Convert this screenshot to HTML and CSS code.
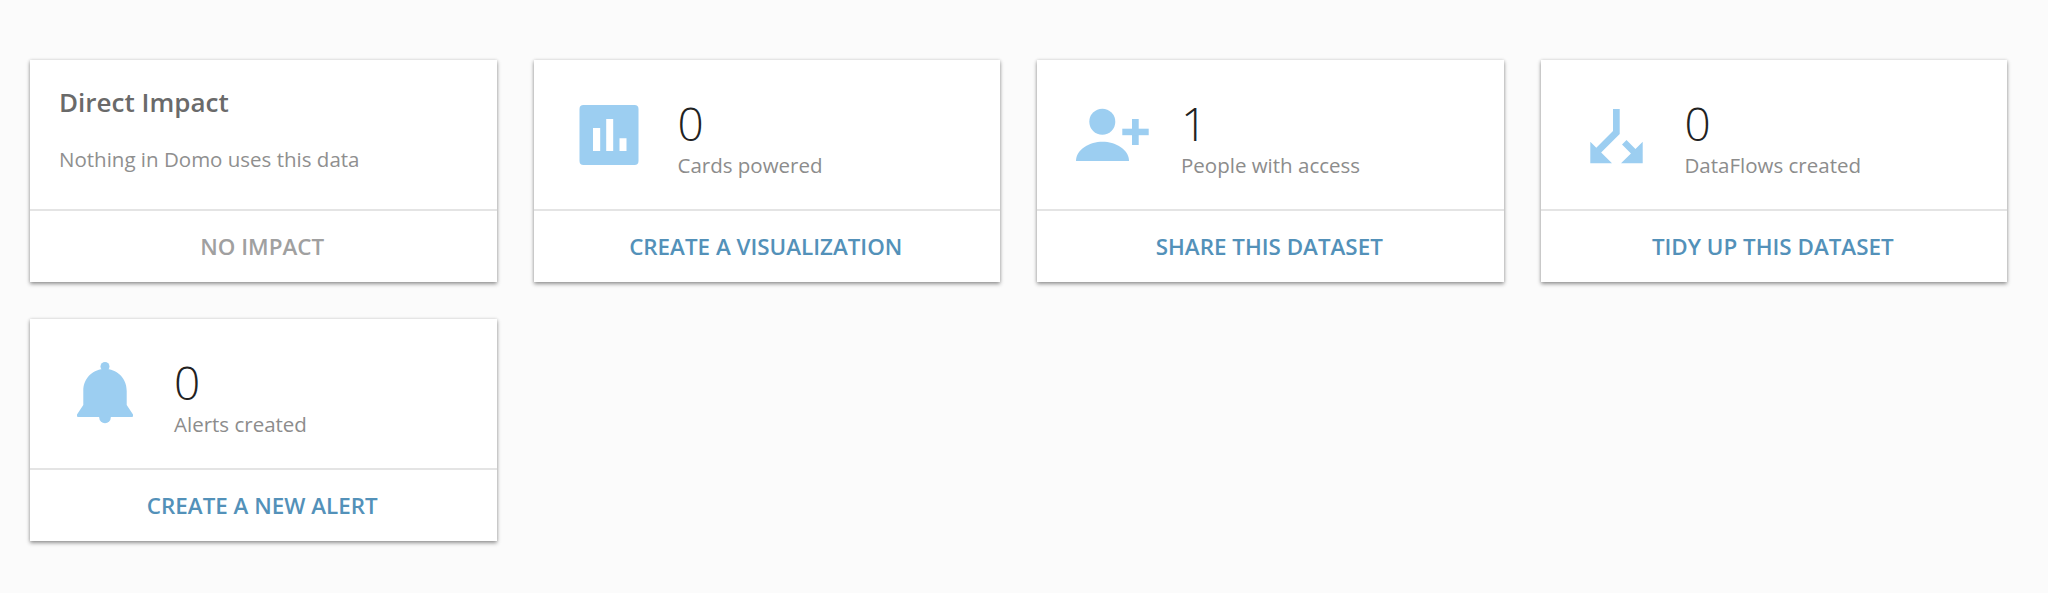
FILE: index.html
```html
<!DOCTYPE html>
<html lang="en">
<head>
    <meta charset="UTF-8">
    <meta name="viewport" content="width=device-width, initial-scale=1.0">
    <title>Impact</title>
    <link rel="stylesheet" href="styles.css">
</head>
<body>
<main class="impact-grid">
	<!-- summary -->
	<section class="card">
		<div class="card-body card-body-text">
			<h4 class="card-title">Direct Impact</h4>
			<p class="card-desc">Nothing in Domo uses this data</p>
		</div>
		<div class="card-action card-action-muted">NO IMPACT</div>
	</section>

	<section class="card">
		<div class="card-body">
			<svg class="card-icon" viewBox="0 0 90 60">
				<path fill-rule="evenodd" d="M19.500 0H70.500a4 4 0 0 1 4 4V56a4 4 0 0 1-4 4H19.500a4 4 0 0 1-4-4V4a4 4 0 0 1 4-4ZM29 23V46H36.200V23ZM42.200 14V46H49.200V14ZM55.500 33.300V46H62.500V33.300Z"/>
			</svg>
			<div class="stat">
				<div class="stat-num">0</div>
				<div class="stat-label">Cards powered</div>
			</div>
		</div>
		<div class="card-action">CREATE A VISUALIZATION</div>
	</section>

	<section class="card">
		<div class="card-body">
			<svg class="card-icon" viewBox="0 0 90 60">
				<circle cx="35.300" cy="16.700" r="13"/>
				<path d="M9 56C9 44 23 36.700 35.500 36.700S62 44 62 56Z"/>
				<rect x="65" y="14" width="6.700" height="26"/>
				<rect x="55.300" y="23.700" width="26.400" height="6.500"/>
			</svg>
			<div class="stat">
				<div class="stat-num">1</div>
				<div class="stat-label">People with access</div>
			</div>
		</div>
		<div class="card-action">SHARE THIS DATASET</div>
	</section>

	<section class="card">
		<div class="card-body">
			<svg class="card-icon" viewBox="0 0 90 60">
				<polygon points="42,4 48.700,4 48.700,29 30.150,47.550 41,58.300 19.300,58.300 19.300,36.700 25.300,42.700 42,26"/>
				<polygon points="55.500,35 64.450,43.950 71.700,36.700 71.700,58.300 50,58.300 59.950,48.450 51,39.500"/>
			</svg>
			<div class="stat">
				<div class="stat-num">0</div>
				<div class="stat-label">DataFlows created</div>
			</div>
		</div>
		<div class="card-action">TIDY UP THIS DATASET</div>
	</section>

	<section class="card">
		<div class="card-body">
			<svg class="card-icon" viewBox="0 0 90 60">
				<circle cx="45" cy="2.500" r="4.500"/>
				<path d="M45 5C56 5 66.700 13 66.700 27V41L73 50.500Q73.500 53 72 53H18Q16.500 53 17 50.500L23.300 41V27C23.300 13 34 5 45 5Z"/>
				<circle cx="45" cy="53.500" r="5.800"/>
			</svg>
			<div class="stat">
				<div class="stat-num">0</div>
				<div class="stat-label">Alerts created</div>
			</div>
		</div>
		<div class="card-action">CREATE A NEW ALERT</div>
	</section>
</main>
</body>
</html>
```

FILE: styles.css
```css
* { margin: 0; padding: 0; box-sizing: border-box; }
body { background: #fbfbfb; font-family: "Open Sans", "Liberation Sans", sans-serif; }

.impact-grid { display: grid; grid-template-columns: repeat(4, 1fr); gap: 37px; padding: 60px 41px 52px 30px; }

.card { height: 222px; background: #fff; display: flex; flex-direction: column; box-shadow: 0 2px 4px rgba(0, 0, 0, .4), 0 0 3px rgba(0, 0, 0, .12); }
.card-body { height: 149px; display: flex; align-items: flex-start; padding: 45px 0 0 30px; }
.card-body-text { display: block; padding: 24px 29px 0; }

.card-title { font-size: 26px; line-height: 36px; font-weight: 600; color: #6a6a6a; }
.card-desc { margin-top: 24px; font-size: 20.500px; line-height: 30px; color: #8f8f8f; }

.card-icon { width: 90px; height: 60px; flex: none; fill: #9ccef1; overflow: visible; }

.stat { margin: -7px 0 0 24px; }
.stat-num { font-size: 46px; line-height: 50px; font-weight: 300; color: #222; }
.stat-label { margin-top: 2px; font-size: 20.500px; line-height: 30px; color: #8c8c8c; }

.card-action { flex: 1; display: flex; align-items: center; justify-content: center; padding-right: 2px; border-top: 2px solid #e4e4e4; font-size: 22.400px; font-weight: 600; color: #5391b9; }
.card-action-muted { color: #a0a0a0; }
```
